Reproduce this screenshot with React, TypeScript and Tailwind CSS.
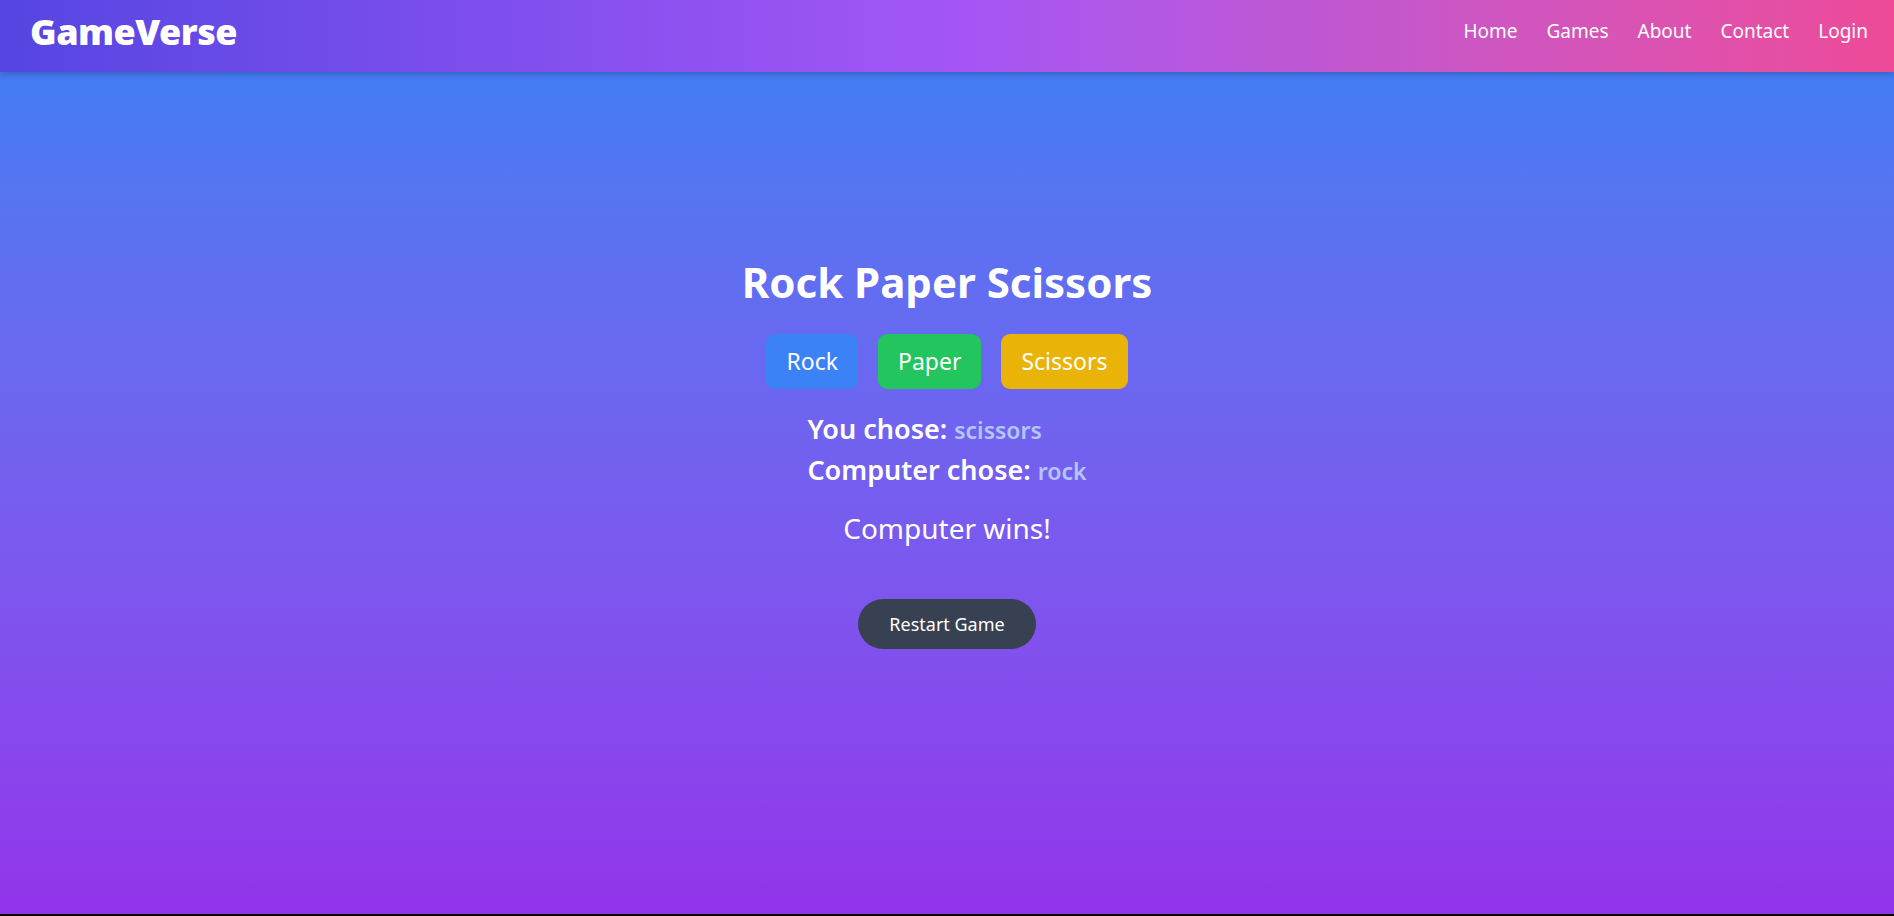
import { useState } from "react";

const CHOICES = [
  { id: "rock", label: "Rock", cls: "bg-[#3b82f6] hover:bg-[#2f74e8]" },
  { id: "paper", label: "Paper", cls: "bg-[#22c55e] hover:bg-[#1bb153]" },
  { id: "scissors", label: "Scissors", cls: "bg-[#eab308] hover:bg-[#d7a406]" },
];

const NAV = ["Home", "Games", "About", "Contact", "Login"];

export default function App() {
  const [you, setYou] = useState("scissors");
  const [cpu, setCpu] = useState("rock");

  function play(c: string) {
    const ids = CHOICES.map((x) => x.id);
    setYou(c);
    setCpu(ids[Math.floor(Math.random() * 3)]);
  }

  function result() {
    if (you === cpu) return "It's a draw!";
    const beats: Record<string, string> = { rock: "scissors", paper: "rock", scissors: "paper" };
    return beats[you] === cpu ? "You win!" : "Computer wins!";
  }

  return (
    <div
      className="flex h-[916px] flex-col bg-black text-white"
      style={{ fontFamily: '"Noto Sans", "Open Sans", sans-serif' }}
    >
      {/* Header */}
      <header className="relative z-10 flex h-[72px] flex-none items-center justify-between bg-gradient-to-r from-[#5545e2] via-[#a355f6] to-[#ee4a98] pb-[9px] pl-[30px] pr-[26px] shadow-[0_3px_6px_rgba(0,0,0,0.18)]">
        <span className="text-[36px] font-black tracking-[-0.5px]">GameVerse</span>
        <nav className="flex gap-[29px] text-[19px]">
          {NAV.map((n) => (
            <a key={n} href="#" className="hover:text-gray-200">
              {n}
            </a>
          ))}
        </nav>
      </header>

      {/* Game */}
      <main className="flex h-[842px] flex-none flex-col items-center bg-gradient-to-b from-[#437cf4] to-[#9233ea] pt-[182px]">
        <h1 className="text-[42px] font-bold leading-[56px]">Rock Paper Scissors</h1>

        <div className="mt-[24px] flex gap-[20px]">
          {CHOICES.map((c) => (
            <button
              key={c.id}
              onClick={() => play(c.id)}
              className={`h-[55px] rounded-[9px] px-[20px] text-[23px] text-white ${c.cls}`}
            >
              {c.label}
            </button>
          ))}
        </div>

        <div className="mt-[20px] text-left text-[27px] font-semibold leading-[40px]">
          <p>
            You chose: <span className="text-[23px] font-semibold text-[#b4c6ff]">{you}</span>
          </p>
          <p>
            Computer chose: <span className="text-[23px] font-semibold text-[#b4c6ff]">{cpu}</span>
          </p>
        </div>

        <p className="mt-[17px] text-[28px] leading-[40px]">{result()}</p>

        <button
          onClick={() => {
            setYou("scissors");
            setCpu("rock");
          }}
          className="mt-[51px] h-[50px] rounded-full bg-[#374151] px-[31px] text-[18px] hover:bg-[#2d3542]"
        >
          Restart Game
        </button>
      </main>
    </div>
  );
}
